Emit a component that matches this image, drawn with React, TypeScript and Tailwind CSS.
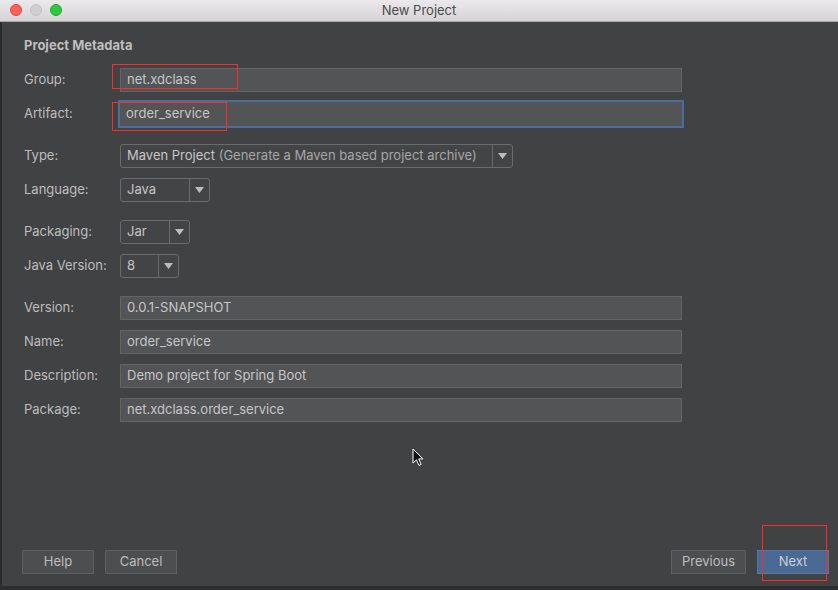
import type { ReactNode } from "react"

const font = { fontFamily: "Inter, 'Liberation Sans', sans-serif" }

function Row({ label, children, className = "" }: { label: string; children: ReactNode; className?: string }) {
  return (
    <div className={`flex h-[24px] items-center ${className}`}>
      <div className="w-[96px] shrink-0 text-[13px] text-[#bdbdbd]">{label}</div>
      {children}
    </div>
  )
}

function Field({ value }: { value: string }) {
  return (
    <div className="flex h-[24px] w-[562px] items-center border border-[#636466] bg-[#535456] pl-[6px] text-[13px] text-[#c6c6c6]">
      {value}
    </div>
  )
}

function Select({ width, children }: { width: string; children: ReactNode }) {
  return (
    <div className={`flex h-[24px] items-center rounded-[3px] border border-[#6a6b6d] bg-[#434446] ${width}`}>
      <div className="flex-1 truncate pl-[6px] text-[13px] text-[#c6c6c6]">{children}</div>
      <div className="flex h-full w-[20px] items-center justify-center border-l border-[#6a6b6d]">
        <svg width="9" height="6" viewBox="0 0 9 6">
          <path d="M0 0h9L4.5 6z" fill="#bdbdbd" />
        </svg>
      </div>
    </div>
  )
}

function Button({ children, primary, width }: { children: ReactNode; primary?: boolean; width: string }) {
  return (
    <div
      className={`flex h-[24px] items-center justify-center border text-[13px] ${width} ${
        primary ? "border-[#5677a4] bg-[#4a6993] text-[#c9d0da]" : "border-[#5e5f61] bg-[#4d4e50] text-[#bdbdbd]"
      }`}
    >
      {children}
    </div>
  )
}

export default function App() {
  return (
    <div className="relative flex h-[590px] w-[838px] flex-col overflow-hidden bg-[#2c2d2e]" style={font}>
      {/* title bar */}
      <div className="relative flex h-[22px] shrink-0 items-center justify-center border-b border-[#a9a8aa] bg-[linear-gradient(180deg,#ebe9eb_0%,#d5d3d5_100%)]">
        <div className="absolute left-[10px] top-[4px] flex gap-[8px]">
          <span className="h-[12px] w-[12px] rounded-full border border-[#e2463f] bg-[#fc605b]" />
          <span className="h-[12px] w-[12px] rounded-full border border-[#c4c2c4] bg-[#d0ced0]" />
          <span className="h-[12px] w-[12px] rounded-full border border-[#1fad2f] bg-[#2cc840]" />
        </div>
        <span className="text-[13px] text-[#4b4b4b]">New Project</span>
      </div>

      <div className="ml-[2px] flex flex-1 flex-col bg-[#414244] pl-[22px]">
        <div className="mt-[15px] h-[16px] text-[13px] leading-[16px] font-bold text-[#bdbdbd]">Project Metadata</div>

        <Row label="Group:" className="mt-[15px]">
          <Field value="net.xdclass" />
        </Row>
        <Row label="Artifact:" className="mt-[10px]">
          <div className="-ml-[2px] flex h-[28px] w-[566px] items-center border-2 border-[#4a6d9c] bg-[#535456] pl-[6px] text-[13px] text-[#c6c6c6]">
            order_service
          </div>
        </Row>
        <Row label="Type:" className="mt-[18px]">
          <Select width="w-[393px]">
            Maven Project <span className="text-[#a6a6a6]">(Generate a Maven based project archive)</span>
          </Select>
        </Row>
        <Row label="Language:" className="mt-[10px]">
          <Select width="w-[90px]">Java</Select>
        </Row>
        <Row label="Packaging:" className="mt-[18px]">
          <Select width="w-[70px]">Jar</Select>
        </Row>
        <Row label="Java Version:" className="mt-[10px]">
          <Select width="w-[59px]">8</Select>
        </Row>
        <Row label="Version:" className="mt-[18px]">
          <Field value="0.0.1-SNAPSHOT" />
        </Row>
        <Row label="Name:" className="mt-[10px]">
          <Field value="order_service" />
        </Row>
        <Row label="Description:" className="mt-[10px]">
          <Field value="Demo project for Spring Boot" />
        </Row>
        <Row label="Package:" className="mt-[10px]">
          <Field value="net.xdclass.order_service" />
        </Row>

        <div className="flex-1" />

        <div className="flex items-center pb-[12px] pr-[9px]">
          <div className="-ml-[2px] flex gap-[11px]">
            <Button width="w-[72px]">Help</Button>
            <Button width="w-[72px]">Cancel</Button>
          </div>
          <div className="ml-auto flex gap-[11px]">
            <Button width="w-[75px]">Previous</Button>
            <Button primary width="w-[72px]">Next</Button>
          </div>
        </div>
      </div>
      <div className="h-[4px] shrink-0 bg-[#2c2d2e]" />

      {/* annotation boxes */}
      <div className="absolute left-[112px] top-[64px] h-[25px] w-[126px] border border-[#ff2a2a]" />
      <div className="absolute left-[112px] top-[102px] h-[29px] w-[115px] border border-[#ff2a2a]" />
      <div className="absolute left-[762px] top-[525px] h-[56px] w-[65px] border border-[#ff2a2a]" />

      {/* mouse pointer */}
      <svg className="absolute left-[412px] top-[448px]" width="12" height="19" viewBox="0 0 12 19">
        <path d="M1 1v14l3.5-3.2 2.4 5.6 2.2-1-2.4-5.5H11z" fill="#111" stroke="#fff" strokeWidth="1" />
      </svg>
    </div>
  )
}
